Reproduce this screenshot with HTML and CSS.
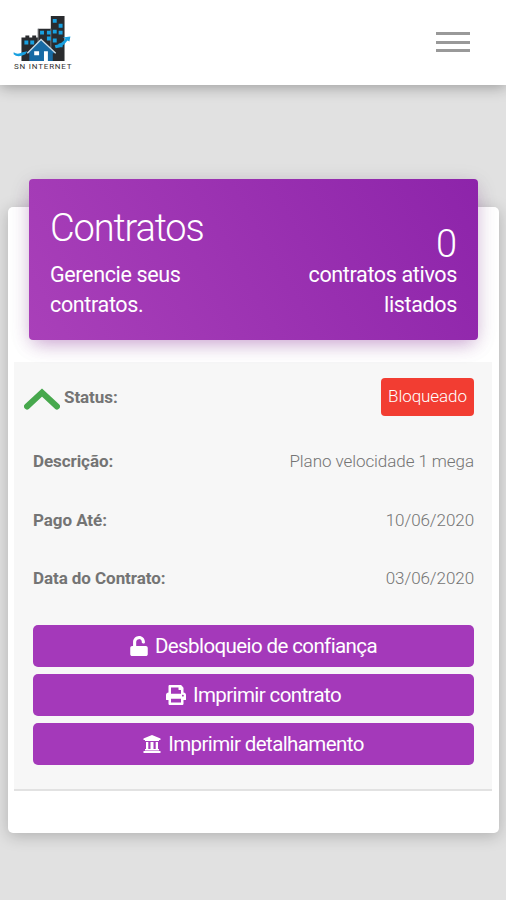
FILE: index.html
```html
<!DOCTYPE html>
<html lang="pt-BR">
<head>
    <meta charset="UTF-8">
    <meta name="viewport" content="width=device-width, initial-scale=1.0">
    <title>Contratos</title>
    <link rel="stylesheet" href="styles.css">
</head>
<body>
    <header class="navbar">
        <div class="logo">
            <svg class="logo-mark" viewBox="0 0 60 47">
                <path fill="#292b2e" d="M8 22h4v-2h4v2h3v-2h4v2h2v-9h13V0h14v46H8z"/>
                <path fill="none" stroke="#74787c" stroke-width="1" d="M25 36V13M38 13v20"/>
                <g fill="#18a0e0">
                    <path d="M40 3h4v4h-4zM46 8h4v4h-4zM40 14h4v4h-4zM46 15h4v4h-4zM27 15h4v4h-4zM34 15h4v4h-4zM34 21h4v4h-4zM40 23h4v4h-4zM46 28h4v4h-4zM11 25h4v4h-4zM17 25h4v4h-4z"/>
                    <path d="M0 37q4 3 9 0l5-1-2 3Q4 43 0 39zM42 30q7-1 11-7l-3-1 8-1-1 5-2-1q-5 7-12 8z"/>
                </g>
                <path fill="#176aa4" d="M28 24L14 38h2v8h24v-8h3z"/>
                <path fill="none" stroke="#c9dde9" stroke-width="1.3" d="M14 38l14-14 15 14"/>
                <path fill="#fff" d="M21 36h5v4h-5zM31 36h4v10h-4z"/>
            </svg>
            <span class="logo-text">SN INTERNET</span>
        </div>
        <button class="menu-btn" aria-label="Menu">
            <span></span>
            <span></span>
            <span></span>
        </button>
    </header>

    <main class="card">
        <div class="card-header">
            <div class="header-left">
                <h1>Contratos</h1>
                <p>Gerencie seus contratos.</p>
            </div>
            <div class="header-right">
                <h2>0</h2>
                <p>contratos ativos listados</p>
            </div>
        </div>

        <div class="contract">
            <div class="row status-row">
                <svg class="chevron" viewBox="0 0 36 22">
                    <path d="M3 18.500L18 4.500l15 14"/>
                </svg>
                <strong>Status:</strong>
                <span class="badge">Bloqueado</span>
            </div>
            <div class="row">
                <strong>Descrição:</strong>
                <span>Plano velocidade 1 mega</span>
            </div>
            <div class="row">
                <strong>Pago Até:</strong>
                <span>10/06/2020</span>
            </div>
            <div class="row">
                <strong>Data do Contrato:</strong>
                <span>03/06/2020</span>
            </div>

            <div class="actions">
                <button class="btn">
                    <svg class="icon-unlock" viewBox="0 0 448 512"><path d="M400 256H152V152.9c0-39.6 31.7-72.5 71.3-72.9 40-.4 72.7 32.1 72.7 72v16c0 13.3 10.7 24 24 24h32c13.3 0 24-10.7 24-24v-16C376 68 307.5-.3 223.5 0 139.5.3 72 69.5 72 153.5V256H48c-26.5 0-48 21.5-48 48v160c0 26.5 21.5 48 48 48h352c26.5 0 48-21.5 48-48V304c0-26.5-21.5-48-48-48z"/></svg>
                    <span>Desbloqueio de confiança</span>
                </button>
                <button class="btn">
                    <svg class="icon-print" viewBox="0 0 512 512"><path d="M448 192V77.25c0-8.49-3.37-16.62-9.37-22.63L393.37 9.37c-6-6-14.14-9.37-22.63-9.37H96C78.33 0 64 14.33 64 32v160c-35.35 0-64 28.65-64 64v112c0 8.84 7.16 16 16 16h48v96c0 17.67 14.33 32 32 32h320c17.67 0 32-14.33 32-32v-96h48c8.84 0 16-7.16 16-16V256c0-35.35-28.65-64-64-64zm-64 256H128v-96h256v96zm0-224H128V64h192v48c0 8.84 7.16 16 16 16h48v96zm48 72c-13.25 0-24-10.75-24-24 0-13.26 10.75-24 24-24s24 10.74 24 24c0 13.25-10.75 24-24 24z"/></svg>
                    <span>Imprimir contrato</span>
                </button>
                <button class="btn">
                    <svg class="icon-bank" viewBox="0 0 18 18"><path d="M9 0l8.500 3.500V5H16v1H2V5H.5V3.500zM3 7h2.300v7H7.500V7h3v7h2.200V7H15v7h1v1.500H2V14h1zM.5 16h17v2H.5z"/></svg>
                    <span>Imprimir detalhamento</span>
                </button>
            </div>
        </div>
    </main>
</body>
</html>
```
FILE: styles.css
```css
* {
    margin: 0;
    padding: 0;
    box-sizing: border-box;
}

body {
    min-height: 100vh;
    background: #e1e1e1;
    font-family: Roboto, "Liberation Sans", sans-serif;
    font-weight: 300;
    color: #747474;
}

.navbar {
    display: flex;
    justify-content: space-between;
    height: 85px;
    padding: 16px 36px 0 13px;
    background: white;
    box-shadow: 0 2px 14px rgba(0,0,0,0.32);
}

.logo {
    width: 60px;
}

.logo-mark {
    display: block;
    width: 60px;
    height: 46px;
}

.logo-text {
    display: block;
    padding-left: 1px;
    font-size: 8px;
    line-height: 10px;
    font-weight: 400;
    letter-spacing: 0.8px;
    white-space: nowrap;
    color: #333;
}

.menu-btn {
    display: flex;
    flex-direction: column;
    gap: 5.5px;
    width: 34px;
    height: 21px;
    margin-top: 16px;
    border: none;
    background: none;
}

.menu-btn span {
    width: 100%;
    height: 3px;
    background: #999;
}

.card {
    margin: 122px 7px 0 8px;
    height: 626px;
    padding: 0 7px 0 6px;
    background: white;
    border-radius: 5px;
    box-shadow: 0 3px 16px rgba(0,0,0,0.22);
}

.card-header {
    position: relative;
    top: -28px;
    display: flex;
    justify-content: space-between;
    height: 161px;
    margin: 0 14px 0 15px;
    padding: 0 21px;
    color: white;
    background: linear-gradient(60deg, #a940b9, #8d24aa);
    border-radius: 4px;
    box-shadow: 0 7px 18px -5px rgba(156,39,176,0.4), 0 4px 22px rgba(0,0,0,0.1);
}

.card-header p {
    font-size: 21.5px;
    line-height: 30px;
    font-weight: 400;
    letter-spacing: -0.35px;
}

.header-left {
    width: 160px;
    padding-top: 27px;
}

.header-left h1 {
    margin-bottom: 9px;
    font-size: 38px;
    line-height: 45px;
    font-weight: 300;
    letter-spacing: -1.15px;
}

.header-right {
    width: 160px;
    padding-top: 49px;
    text-align: right;
}

.header-right h2 {
    font-size: 38px;
    line-height: 32px;
    font-weight: 300;
}

.contract {
    height: 429px;
    margin-top: -6px;
    padding: 3px 18px 0 19px;
    background: #f7f7f7;
    border-bottom: 2px solid #e2e2e2;
}

.row {
    display: flex;
    align-items: center;
    justify-content: space-between;
    height: 58.5px;
    font-size: 17px;
    letter-spacing: -0.07px;
}

.row strong {
    font-weight: 700;
}

.status-row {
    height: 64px;
    margin-bottom: 3px;
}

.chevron {
    width: 36px;
    height: 22px;
    margin: 4px 4px 0 -9px;
}

.chevron path {
    fill: none;
    stroke: #47a84d;
    stroke-width: 6;
    stroke-linecap: round;
}

.badge {
    width: 93px;
    height: 38px;
    margin-left: auto;
    line-height: 37px;
    text-align: center;
    color: white;
    background: #f23d32;
    border-radius: 4px;
}

.actions {
    display: flex;
    flex-direction: column;
    gap: 7px;
    padding-top: 17px;
}

.btn {
    display: flex;
    align-items: center;
    justify-content: center;
    gap: 7px;
    height: 42px;
    border: none;
    border-radius: 5px;
    background: #a439ba;
    color: white;
    font-family: inherit;
    font-size: 20.5px;
    font-weight: 400;
    letter-spacing: -0.6px;
}

.btn svg {
    fill: white;
}

.icon-unlock {
    width: 18px;
    height: 20px;
}

.icon-print {
    width: 20px;
    height: 20px;
}

.icon-bank {
    width: 18px;
    height: 18px;
}
```
